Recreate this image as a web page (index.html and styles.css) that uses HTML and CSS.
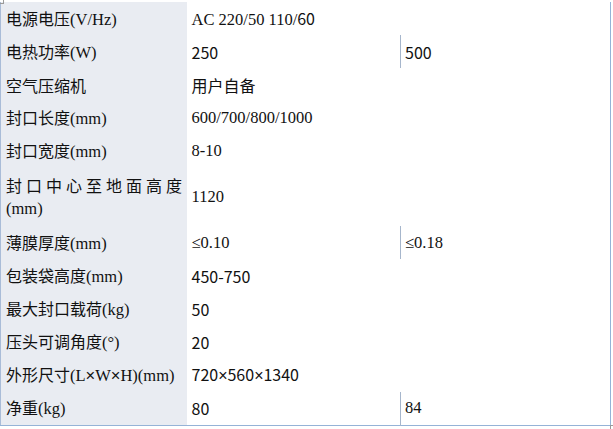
FILE: index.html
```html
<!DOCTYPE html>
<html lang="zh">
<head>
<meta charset="utf-8">
<title>参数</title>
<link rel="stylesheet" href="styles.css">
</head>
<body>
<span class="mark mark-tl"></span>
<table class="spec">
  <colgroup><col class="c1"><col class="c2"><col class="c3"></colgroup>
  <tr><th>电源电压<span class="se">(V/Hz)</span></th><td colspan="2"><span class="se">AC 220/50 110/</span>60</td></tr>
  <tr><th>电热功率<span class="se">(W)</span></th><td>250</td><td class="split">500</td></tr>
  <tr><th>空气压缩机</th><td colspan="2">用户自备</td></tr>
  <tr><th>封口长度<span class="se">(mm)</span></th><td colspan="2" class="se">600/700/800/1000</td></tr>
  <tr><th>封口宽度<span class="se">(mm)</span></th><td colspan="2" class="se">8-10</td></tr>
  <tr class="tall"><th><span class="spread">封口中心至地面高度</span><br><span class="se">(mm)</span></th><td colspan="2" class="se">1120</td></tr>
  <tr><th>薄膜厚度<span class="se">(mm)</span></th><td class="se">≤0.10</td><td class="split se">≤0.18</td></tr>
  <tr><th>包装袋高度<span class="se">(mm)</span></th><td colspan="2">450-750</td></tr>
  <tr><th>最大封口载荷<span class="se">(kg)</span></th><td colspan="2">50</td></tr>
  <tr><th>压头可调角度<span class="se">(°)</span></th><td colspan="2">20</td></tr>
  <tr><th>外形尺寸<span class="se">(L<span class="x">×</span>W<span class="x">×</span>H)(mm)</span></th><td colspan="2">720<span class="x">×</span>560<span class="x">×</span>1340</td></tr>
  <tr><th>净重<span class="se">(kg)</span></th><td>80</td><td class="split se">84</td></tr>
</table>
<span class="mark mark-br"></span>
</body>
</html>
```
FILE: styles.css
```css
html, body {
  margin: 0;
  padding: 0;
  background: #ffffff;
}
body {
  padding-top: 2px;
  position: relative;
  width: 613px;
  height: 427px;
  font-family: "Noto Sans CJK SC", "Noto Sans", sans-serif;
  font-size: 16px;
  color: #111;
}
.spec {
  border-collapse: collapse;
  table-layout: fixed;
  width: 611px;
  border-left: 1px solid #a9bcd8;
  border-right: 1px solid #95b3d7;
  border-bottom: 1px solid #95b3d7;
}
.c1 { width: 186px; }
.c2 { width: 214px; }
.c3 { width: auto; }
.spec tr { height: 33.2px; }
.spec tr.tall { height: 58px; }
.spec th, .spec td {
  padding: 0 0 0 5px;
  text-align: left;
  vertical-align: middle;
  font-weight: normal;
  line-height: 22px;
  white-space: nowrap;
}
.spec th {
  background: #e9ecf2;
}
.spec td {
  padding-left: 5px;
}
.spec td.split {
  border-left: 1px solid #a6b6cc;
  padding-left: 4px;
}
.se {
  font-family: "Liberation Serif", "Noto Sans CJK SC", serif;
  font-size: 16.5px;
}
.x {
  font-family: "Liberation Sans", sans-serif;
}
.spread {
  letter-spacing: 4px;
}
.mark {
  position: absolute;
  width: 3px;
  height: 3px;
  border-color: #9a9a9a;
  border-style: solid;
}
.mark-tl {
  left: 0;
  top: 0;
  border-width: 0 1px 1px 0;
}
.mark-br {
  left: 610px;
  top: 425px;
  border-width: 1px 0 0 1px;
}
```
